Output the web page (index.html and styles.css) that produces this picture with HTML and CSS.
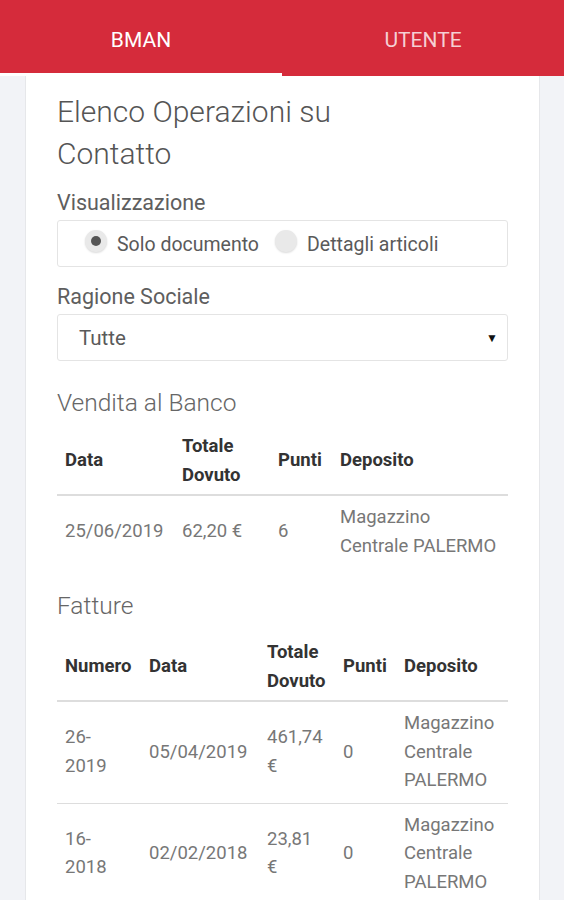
FILE: index.html
```html
<!DOCTYPE html>
<html lang="it">
<head>
<meta charset="utf-8">
<title>BMAN</title>
<link rel="stylesheet" href="styles.css">
</head>
<body>
<header class="tabs">
  <div class="tab active">BMAN</div>
  <div class="tab">UTENTE</div>
</header>
<main class="page">
  <section class="card">
    <h1 class="title">Elenco Operazioni su Contatto</h1>

    <div class="label">Visualizzazione</div>
    <div class="radio-box">
      <span class="radio checked"></span><span class="radio-text">Solo documento</span>
      <span class="radio"></span><span class="radio-text">Dettagli articoli</span>
    </div>

    <div class="label label-2">Ragione Sociale</div>
    <div class="select">
      <span>Tutte</span>
      <span class="caret">&#9660;</span>
    </div>

    <h2 class="section">Vendita al Banco</h2>
    <table class="tbl">
      <colgroup>
        <col class="c1-1"><col class="c1-2"><col class="c1-3"><col class="c1-4">
      </colgroup>
      <thead>
        <tr><th>Data</th><th>Totale Dovuto</th><th>Punti</th><th>Deposito</th></tr>
      </thead>
      <tbody>
        <tr><td>25/06/2019</td><td>62,20 €</td><td>6</td><td>Magazzino Centrale PALERMO</td></tr>
      </tbody>
    </table>

    <h2 class="section section-2">Fatture</h2>
    <table class="tbl">
      <colgroup>
        <col class="c2-1"><col class="c2-2"><col class="c2-3"><col class="c2-4"><col class="c2-5">
      </colgroup>
      <thead>
        <tr><th>Numero</th><th>Data</th><th>Totale Dovuto</th><th>Punti</th><th>Deposito</th></tr>
      </thead>
      <tbody>
        <tr><td>26-<br>2019</td><td>05/04/2019</td><td>461,74 €</td><td>0</td><td>Magazzino Centrale PALERMO</td></tr>
        <tr><td>16-<br>2018</td><td>02/02/2018</td><td>23,81 €</td><td>0</td><td>Magazzino Centrale PALERMO</td></tr>
      </tbody>
    </table>
  </section>
</main>
</body>
</html>
```

FILE: styles.css
```css
* { box-sizing: border-box; }
html, body { margin: 0; padding: 0; }
body {
  background: #f2f3f7;
  font-family: Roboto, "Liberation Sans", sans-serif;
  color: #555;
  height: 900px;
  overflow: hidden;
}
.tabs {
  display: flex;
  background: #d52b3b;
  height: 76px;
}
.tab {
  flex: 1;
  display: flex;
  align-items: center;
  justify-content: center;
  color: rgba(255, 255, 255, 0.78);
  font-size: 21px;
  height: 76px;
  padding-top: 4px;
}
.tab.active {
  color: #fff;
  border-bottom: 3px solid #fff;
  padding-top: 6px;
}
.page {
  padding: 0 24px 0 25px;
}
.card {
  background: #fff;
  border-left: 1px solid #e6e7ea;
  border-right: 1px solid #e6e7ea;
  padding: 15px 31px 40px 31px;
  min-height: 824px;
}
.title {
  margin: 0;
  max-width: 380px;
  font-size: 30px;
  font-weight: 300;
  line-height: 42px;
  color: #555;
}
.label {
  margin-top: 12px;
  font-size: 21.5px;
  line-height: 31px;
  color: #5e5e5e;
  margin-bottom: 2px;
}
.label-2 { margin-top: 14px; }
.radio-box {
  border: 1px solid #e4e4e4;
  border-radius: 3px;
  height: 47px;
  display: flex;
  align-items: center;
  padding-left: 27px;
  font-size: 19.5px;
  color: #5a5a5a;
}
.radio {
  width: 22px;
  height: 22px;
  border-radius: 50%;
  background: #e9e9e9;
  box-shadow: 0 1px 2px rgba(0,0,0,0.15);
  display: flex;
  align-items: center;
  justify-content: center;
  margin-top: -6px;
  flex: none;
}
.radio.checked::after {
  content: "";
  width: 10px;
  height: 10px;
  border-radius: 50%;
  background: #555;
}
.radio-text {
  margin-left: 10px;
  margin-right: 16px;
  padding-top: 2px;
}
.select {
  border: 1px solid #e4e4e4;
  border-radius: 3px;
  height: 47px;
  display: flex;
  align-items: center;
  justify-content: space-between;
  padding: 0 9px 0 21px;
  font-size: 20.5px;
  color: #5a5a5a;
}
.caret {
  font-size: 12px;
  color: #111;
}
.section {
  margin: 24px 0 5px 0;
  font-size: 24.5px;
  font-weight: 300;
  line-height: 35px;
  color: #666;
}
.section-2 { margin-top: 20px; margin-bottom: 8px; }
.tbl {
  width: 100%;
  border-collapse: collapse;
  table-layout: fixed;
  font-size: 18.5px;
  line-height: 28.5px;
}
.tbl th {
  text-align: left;
  font-weight: 700;
  color: #333;
  padding: 7px 8px 5px 8px;
  vertical-align: middle;
  border-bottom: 2px solid #ddd;
}
.tbl td {
  color: #777;
  padding: 7px 8px 8px 8px;
  vertical-align: middle;
  border-top: 1px solid #ddd;
}
.tbl tbody tr:first-child td { border-top: 0; }
.c1-1 { width: 117px; }
.c1-2 { width: 96px; }
.c1-3 { width: 62px; }
.c1-4 { width: auto; }
.c2-1 { width: 84px; }
.c2-2 { width: 118px; }
.c2-3 { width: 76px; }
.c2-4 { width: 61px; }
.c2-5 { width: auto; }
```
